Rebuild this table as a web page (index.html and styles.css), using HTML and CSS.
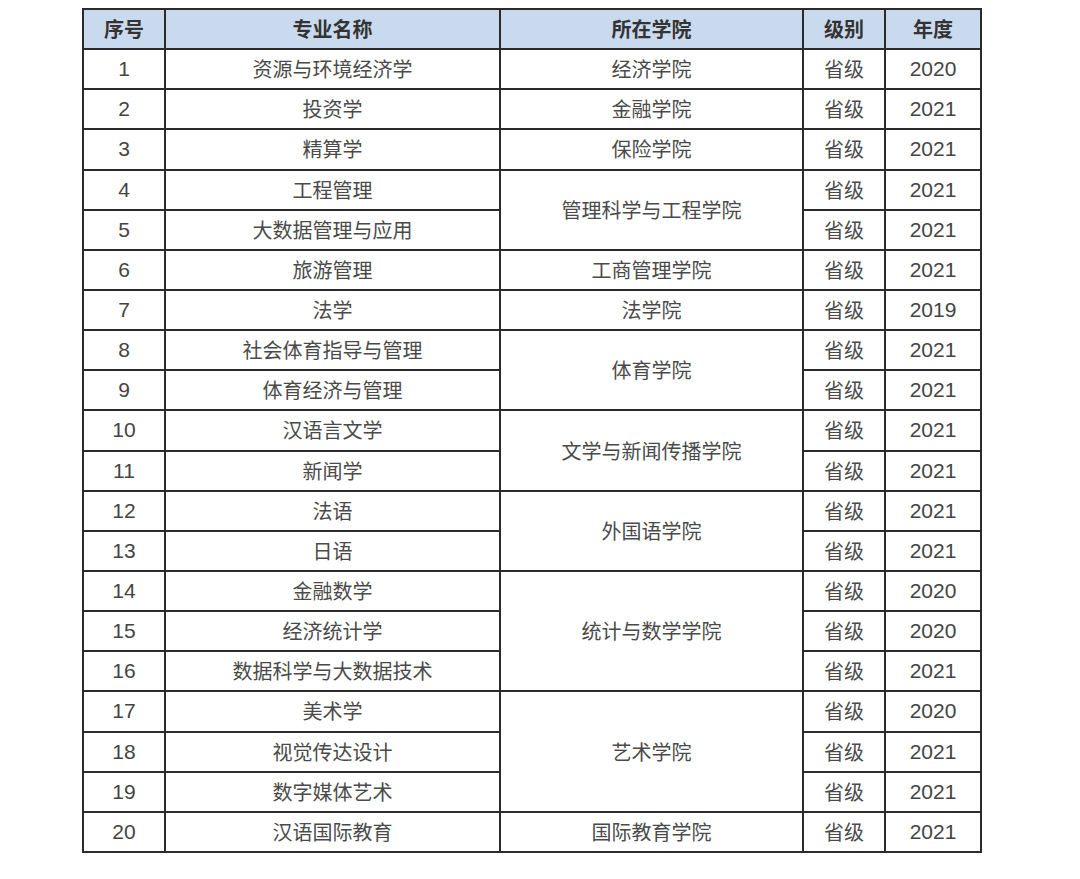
FILE: index.html
```
<!DOCTYPE html>
<html lang="zh-CN">
<head>
<meta charset="utf-8">
<title>专业列表</title>
<link rel="stylesheet" href="styles.css">
</head>
<body>
<table class="majors">
<colgroup>
<col class="c-no"><col class="c-name"><col class="c-college"><col class="c-level"><col class="c-year">
</colgroup>
<thead>
<tr><th>序号</th><th>专业名称</th><th>所在学院</th><th>级别</th><th>年度</th></tr>
</thead>
<tbody>
<tr><td class="num">1</td><td>资源与环境经济学</td><td>经济学院</td><td>省级</td><td class="num">2020</td></tr>
<tr><td class="num">2</td><td>投资学</td><td>金融学院</td><td>省级</td><td class="num">2021</td></tr>
<tr><td class="num">3</td><td>精算学</td><td>保险学院</td><td>省级</td><td class="num">2021</td></tr>
<tr><td class="num">4</td><td>工程管理</td><td rowspan="2">管理科学与工程学院</td><td>省级</td><td class="num">2021</td></tr>
<tr><td class="num">5</td><td>大数据管理与应用</td><td>省级</td><td class="num">2021</td></tr>
<tr><td class="num">6</td><td>旅游管理</td><td>工商管理学院</td><td>省级</td><td class="num">2021</td></tr>
<tr><td class="num">7</td><td>法学</td><td>法学院</td><td>省级</td><td class="num">2019</td></tr>
<tr><td class="num">8</td><td>社会体育指导与管理</td><td rowspan="2">体育学院</td><td>省级</td><td class="num">2021</td></tr>
<tr><td class="num">9</td><td>体育经济与管理</td><td>省级</td><td class="num">2021</td></tr>
<tr><td class="num">10</td><td>汉语言文学</td><td rowspan="2">文学与新闻传播学院</td><td>省级</td><td class="num">2021</td></tr>
<tr><td class="num">11</td><td>新闻学</td><td>省级</td><td class="num">2021</td></tr>
<tr><td class="num">12</td><td>法语</td><td rowspan="2">外国语学院</td><td>省级</td><td class="num">2021</td></tr>
<tr><td class="num">13</td><td>日语</td><td>省级</td><td class="num">2021</td></tr>
<tr><td class="num">14</td><td>金融数学</td><td rowspan="3">统计与数学学院</td><td>省级</td><td class="num">2020</td></tr>
<tr><td class="num">15</td><td>经济统计学</td><td>省级</td><td class="num">2020</td></tr>
<tr><td class="num">16</td><td>数据科学与大数据技术</td><td>省级</td><td class="num">2021</td></tr>
<tr><td class="num">17</td><td>美术学</td><td rowspan="3">艺术学院</td><td>省级</td><td class="num">2020</td></tr>
<tr><td class="num">18</td><td>视觉传达设计</td><td>省级</td><td class="num">2021</td></tr>
<tr><td class="num">19</td><td>数字媒体艺术</td><td>省级</td><td class="num">2021</td></tr>
<tr><td class="num">20</td><td>汉语国际教育</td><td>国际教育学院</td><td>省级</td><td class="num">2021</td></tr>
</tbody>
</table>
</body>
</html>
```

FILE: styles.css
```
html, body {
  margin: 0;
  padding: 0;
  background: #ffffff;
}

body {
  font-family: "Liberation Sans", "Noto Sans CJK SC", sans-serif;
  color: #444444;
}

.majors {
  border-collapse: collapse;
  table-layout: fixed;
  width: 898px;
  margin: 8px 0 0 82px;
}

.c-no { width: 82px; }
.c-name { width: 335px; }
.c-college { width: 303px; }
.c-level { width: 82px; }
.c-year { width: 96px; }

.majors th,
.majors td {
  border: 2px solid #2b2b2b;
  text-align: center;
  vertical-align: middle;
  padding: 0;
  height: 40.15px;
  box-sizing: border-box;
  font-size: 20px;
  line-height: 24px;
  white-space: nowrap;
}

.majors th {
  background: #cadaee;
  color: #333333;
  font-weight: 600;
  font-family: "Noto Sans CJK SC", sans-serif;
}

.majors td {
  font-family: "Noto Sans CJK SC", sans-serif;
  font-weight: 400;
  color: #4a4a4a;
}

.majors td.num {
  font-family: "Liberation Sans", "Noto Sans CJK SC", sans-serif;
  font-size: 21px;
  color: #444444;
}
```
